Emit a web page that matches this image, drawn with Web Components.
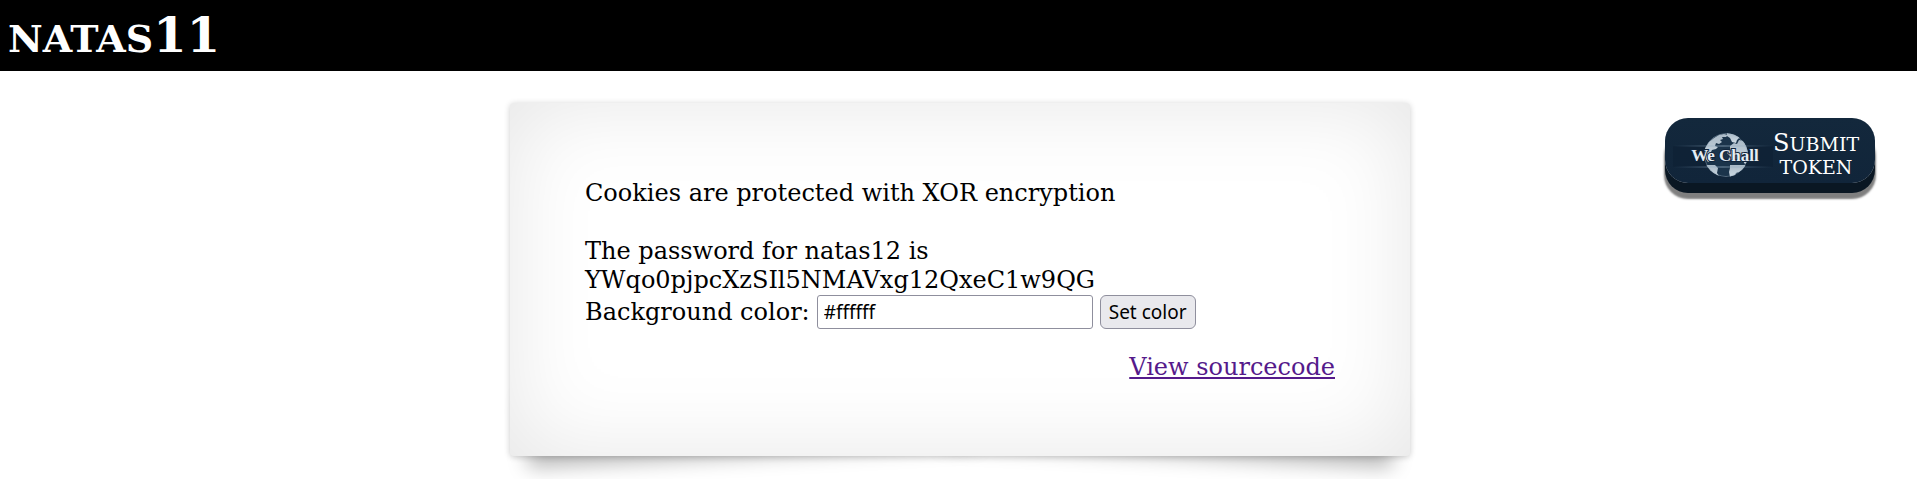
<!DOCTYPE html>
<html lang="en">
<head>
<meta charset="utf-8">
<meta name="viewport" content="width=device-width, initial-scale=1">
<title>natas11</title>
<style>
  body { margin: 0; background: #fff; color: #000; font: 24px/29px "DejaVu Serif", serif; }
</style>
</head>
<body>
<natas-page>
  <natas-header slot="header" level="11"></natas-header>
  <natas-card>
    <p>Cookies are protected with XOR encryption</p>
    <p>The password for natas12 is<br>YWqo0pjpcXzSIl5NMAVxg12QxeC1w9QG</p>
    <color-form value="#ffffff"></color-form>
    <source-link slot="footer" href="#source">View sourcecode</source-link>
  </natas-card>
  <submit-token slot="aside"></submit-token>
</natas-page>
<script>
  const define = (name, html, setup) => {
    const template = document.createElement('template');
    template.innerHTML = html;
    customElements.define(name, class extends HTMLElement {
      constructor() {
        super();
        this.attachShadow({ mode: 'open' }).append(template.content.cloneNode(true));
      }
      connectedCallback() { if (setup) setup(this, this.shadowRoot); }
    });
  };

  define('natas-page', `
    <style>
      :host { display: block; }
      main { display: grid; grid-template-columns: 1fr minmax(0, 900px) 1fr; align-items: start; padding: 32px 0 24px 3px; }
      .content { grid-column: 2; }
      aside { display: flex; justify-content: flex-end; padding: 15px 42px 0 0; }
      @media (max-width: 1400px) {
        main { grid-template-columns: minmax(0, 900px); justify-content: center; gap: 32px; }
        .content { grid-column: 1; }
      }
    </style>
    <slot name="header"></slot>
    <main><div class="content"><slot></slot></div><aside><slot name="aside"></slot></aside></main>`);

  define('natas-header', `
    <style>
      :host { display: block; background: #000; color: #fff; }
      h1 { margin: 0; padding: 7px 8px 8px; font-size: 48px; line-height: 56px; font-weight: bold; }
      .caps { font-size: 38px; line-height: 1; }
    </style>
    <h1><span class="caps">NATAS</span><span class="level"></span></h1>`,
    (el, root) => { root.querySelector('.level').textContent = el.getAttribute('level'); });

  define('natas-card', `
    <style>
      :host { display: block; position: relative; z-index: 0; }
      .shade { position: absolute; z-index: -2; bottom: 22px; width: 50%; max-width: 450px; height: 20%; box-shadow: 0 22px 20px rgba(0,0,0,.28); }
      .left { left: 15px; transform: rotate(-3deg); }
      .right { right: 15px; transform: rotate(3deg); }
      .sheet { position: relative; z-index: -1; padding: 76px 75px 74px; background: #fff; box-shadow: 0 1px 6px rgba(0,0,0,.2), 0 0 90px rgba(0,0,0,.1) inset; border-radius: 4px; }
      ::slotted(p) { margin: 0; }
      ::slotted(p:first-child) { margin: 0 0 29px; }
      footer { display: flex; justify-content: flex-end; margin-top: 24px; }
    </style>
    <div class="shade left"></div><div class="shade right"></div>
    <div class="sheet"><slot></slot><footer><slot name="footer"></slot></footer></div>`);

  define('color-form', `
    <style>
      :host { display: block; }
      form { display: flex; flex-wrap: wrap; align-items: center; gap: 7px; }
      input, button { box-sizing: border-box; height: 34px; margin: 0; border: 1px solid #8f8f9d; color: #000; font: 19px/28px "Noto Sans", sans-serif; }
      input { width: 276px; padding: 0 6px; border-radius: 3px; background: #fff; }
      button { padding: 0 8px; border-radius: 6px; background: #e9e9ed; }
    </style>
    <form>
      <label for="bgcolor">Background color:</label>
      <input id="bgcolor" name="bgcolor" type="text">
      <button type="button">Set color</button>
    </form>`,
    (el, root) => { root.querySelector('input').value = el.getAttribute('value'); });

  define('source-link', `
    <style>
      :host { display: block; }
      a { color: #551a8b; text-decoration: underline; }
    </style>
    <a><slot></slot></a>`,
    (el, root) => { root.querySelector('a').href = el.getAttribute('href'); });

  define('submit-token', `
    <style>
      :host { display: block; }
      button { display: flex; align-items: center; justify-content: space-between; box-sizing: border-box; width: 210px; height: 65px; margin: 0; padding: 0 18px 0 8px; border: 0; border-radius: 23px; background: linear-gradient(#13283c, #11253a); box-shadow: 0 10px 0 #0a1723, 0 15px 2px 1px rgba(0,0,0,.5); color: #fff; font: 24px/23px "DejaVu Serif", serif; text-align: center; }
      .label { padding-top: 9px; }
      .caps { font-size: 19px; line-height: 1; }
      svg { display: block; flex: none; }
    </style>
    <button type="button">
      <svg width="100" height="56" viewBox="0 0 100 56" aria-hidden="true">
        <defs>
          <linearGradient id="ray" gradientUnits="userSpaceOnUse" x1="0" x2="100"><stop offset="0" stop-color="#6d8ca8" stop-opacity="0"/><stop offset=".5" stop-color="#9db5c9"/><stop offset="1" stop-color="#6d8ca8" stop-opacity="0"/></linearGradient>
          <linearGradient id="land" x2="0" y2="1"><stop offset="0" stop-color="#a9b9c6"/><stop offset="1" stop-color="#cfdbe4"/></linearGradient>
          <clipPath id="disc"><circle cx="53" cy="32" r="22"/></clipPath>
        </defs>
        <path d="M0 23h100v21H0z" fill="#0c1e31" opacity=".5"/>
        <g clip-path="url(#disc)">
          <circle cx="53" cy="32" r="22" fill="#1b344b"/>
          <g fill="url(#land)">
            <path d="M31 33l1-8 4-6 5-4 5-3 5-1 4 1-2 2-4 0 1 2-3 1 2 2-3 2-3-1-1 3 3 1-2 2-4 1-2 4 3 2-2 4-3 2z"/>
            <path d="M54 10l8 1 5 3-3 3-1 3-4-1-2-4-3-2z"/>
            <path d="M57 23l4-3 3 1 2-4 5 1 4 8v12l-3 3-2-3-3 1-1-3-4 0-3 2-4-2 2-3-3-3 3-3z"/>
            <path d="M31 42h11l3 3-1 5 4 6-9-2-7-7z"/>
            <path d="M57 42h16l-2 4-5 3-3 1-1 3-5 1-1-5 1-4z"/>
          </g>
          <circle cx="53" cy="32" r="21.5" fill="none" stroke="#9eb0bf" opacity=".45"/>
        </g>
        <path d="M0 22.5h100v1H0zM0 43.5h100v1H0z" fill="url(#ray)" opacity=".7"/>
        <text x="52" y="38" text-anchor="middle" font-family="Liberation Serif, serif" font-size="17" font-weight="bold" fill="#e6edf4" stroke="#10243a" stroke-width="2" paint-order="stroke">We Chall</text>
      </svg>
      <span class="label">S<span class="caps">UBMIT</span><br><span class="caps">TOKEN</span></span>
    </button>`);
</script>
</body>
</html>
